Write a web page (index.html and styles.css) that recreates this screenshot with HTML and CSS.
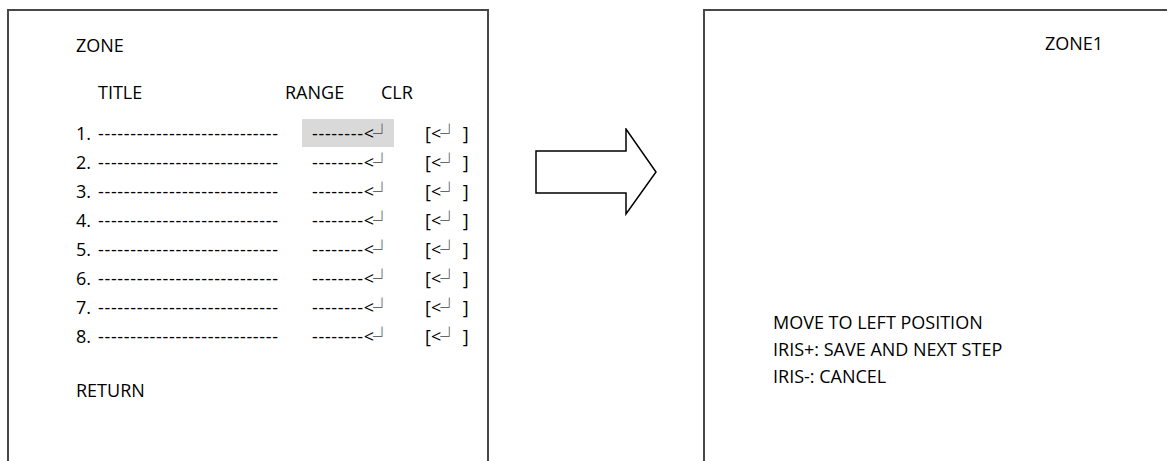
FILE: index.html
```html
<!DOCTYPE html>
<html>
	<head>
		<meta charset="utf-8">
		<title>ZONE</title>
		<link rel="stylesheet" href="styles.css">
	</head>
	<body>
		<div class="page">
			<div class="panel menu">
				<div class="caption">ZONE</div>
				<div class="head">
					<span class="h-title">TITLE</span>
					<span class="h-range">RANGE</span>
					<span class="h-clr">CLR</span>
				</div>
				<div class="list">
					<span class="num">1.</span><span class="dash">----------------------------</span><span class="range sel"><span class="dash">--------</span>&lt;<span class="ret">┘</span></span><span class="clr">[&lt;<span class="ret">┘</span> ]</span>
					<span class="num">2.</span><span class="dash">----------------------------</span><span class="range"><span class="dash">--------</span>&lt;<span class="ret">┘</span></span><span class="clr">[&lt;<span class="ret">┘</span> ]</span>
					<span class="num">3.</span><span class="dash">----------------------------</span><span class="range"><span class="dash">--------</span>&lt;<span class="ret">┘</span></span><span class="clr">[&lt;<span class="ret">┘</span> ]</span>
					<span class="num">4.</span><span class="dash">----------------------------</span><span class="range"><span class="dash">--------</span>&lt;<span class="ret">┘</span></span><span class="clr">[&lt;<span class="ret">┘</span> ]</span>
					<span class="num">5.</span><span class="dash">----------------------------</span><span class="range"><span class="dash">--------</span>&lt;<span class="ret">┘</span></span><span class="clr">[&lt;<span class="ret">┘</span> ]</span>
					<span class="num">6.</span><span class="dash">----------------------------</span><span class="range"><span class="dash">--------</span>&lt;<span class="ret">┘</span></span><span class="clr">[&lt;<span class="ret">┘</span> ]</span>
					<span class="num">7.</span><span class="dash">----------------------------</span><span class="range"><span class="dash">--------</span>&lt;<span class="ret">┘</span></span><span class="clr">[&lt;<span class="ret">┘</span> ]</span>
					<span class="num">8.</span><span class="dash">----------------------------</span><span class="range"><span class="dash">--------</span>&lt;<span class="ret">┘</span></span><span class="clr">[&lt;<span class="ret">┘</span> ]</span>
				</div>
				<div class="back">RETURN</div>
			</div>

			<div class="gap">
				<svg class="arrow" width="123" height="88" viewBox="0 0 123 88">
					<polygon points="1,23 91,23 91,1 121,44 91,86 91,65 1,65" fill="#fff" stroke="#000" stroke-width="1.5" stroke-linejoin="miter"/>
				</svg>
			</div>

			<div class="panel screen">
				<div class="zone-name">ZONE1</div>
				<div class="hint">
					MOVE TO LEFT POSITION<br>
					IRIS+: SAVE AND NEXT STEP<br>
					IRIS-: CANCEL
				</div>
			</div>
		</div>
	</body>
</html>
```

FILE: styles.css
```css
*{
	margin:0;
	padding:0;
}
body{
	background:#fff;
	color:#000;
	font-family:"Open Sans","Liberation Sans",sans-serif;
	font-size:18px;
	overflow:hidden;
}
.page{
	display:flex;
	align-items:flex-start;
	padding-top:9px;
	padding-left:7px;
}
.panel{
	box-sizing:border-box;
	height:452px;
	border:2px solid #474747;
	border-bottom:none;
}
.menu{
	width:482px;
	padding:20px 0 0 67px;
	line-height:29px;
}
.head{
	display:flex;
	margin-top:18px;
	padding-left:22px;
}
.h-title{
	width:187px;
}
.h-range{
	width:96px;
}
.list{
	display:grid;
	grid-template-columns:22px 204px 92px auto;
	margin-top:12px;
	white-space:nowrap;
}
.dash{
	letter-spacing:0.66px;
}
.range{
	padding-left:10px;
}
.clr{
	padding-left:31px;
}
.sel{
	background-color:#d9d9d9;
	height:28px;
}
.ret{
	font-family:"Noto Sans CJK SC",sans-serif;
	line-height:0;
	color:#444;
	margin-left:-1px;
}
.back{
	margin-top:25px;
}
.gap{
	width:214px;
}
.arrow{
	display:block;
	margin:119px 0 0 46px;
}
.screen{
	width:464px;
	border-right:none;
	padding:18px 0 0 68px;
}
.zone-name{
	margin-left:272px;
	line-height:29px;
}
.hint{
	margin-top:251px;
	line-height:27px;
}
```
